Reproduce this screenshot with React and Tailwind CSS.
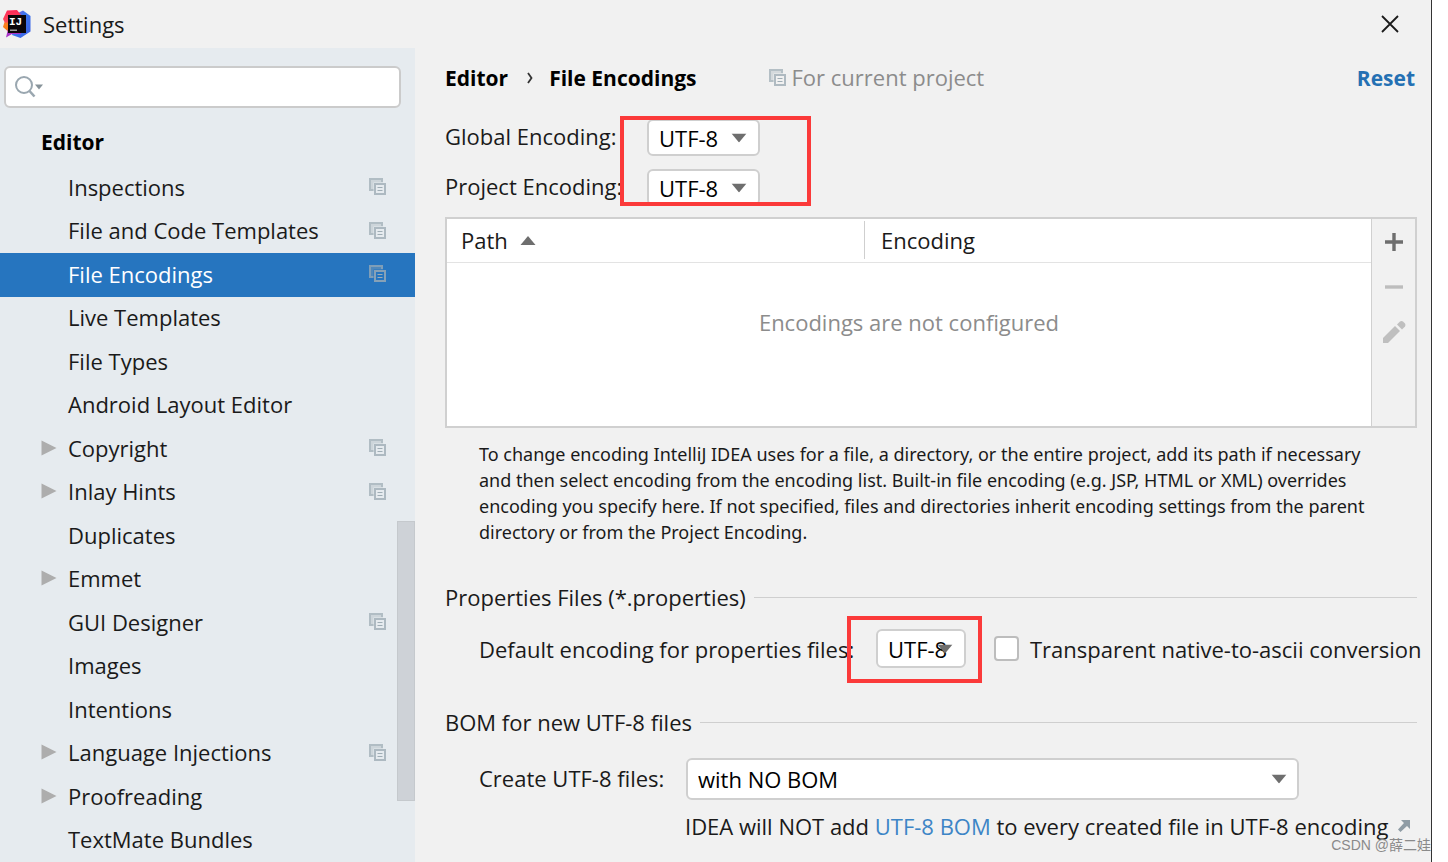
import { useState } from 'react';

const treeItems = [
    { name: 'Inspections', project: true },
    { name: 'File and Code Templates', project: true },
    { name: 'File Encodings', project: true },
    { name: 'Live Templates' },
    { name: 'File Types' },
    { name: 'Android Layout Editor' },
    { name: 'Copyright', project: true, group: true },
    { name: 'Inlay Hints', project: true, group: true },
    { name: 'Duplicates' },
    { name: 'Emmet', group: true },
    { name: 'GUI Designer', project: true },
    { name: 'Images' },
    { name: 'Intentions' },
    { name: 'Language Injections', project: true, group: true },
    { name: 'Proofreading', group: true },
    { name: 'TextMate Bundles' },
];

const Logo = () => (
    <svg viewBox="0 0 28 28" className="w-7 h-7 shrink-0" aria-hidden="true">
        <defs>
            <linearGradient id="pinkSide" x1="0" y1="0" x2="0" y2="1">
                <stop offset="0" stopColor="#fe2857" />
                <stop offset="0.42" stopColor="#fb4a5a" />
                <stop offset="0.5" stopColor="#fc801d" />
                <stop offset="0.7" stopColor="#f97a12" />
                <stop offset="0.8" stopColor="#a935c9" />
            </linearGradient>
            <linearGradient id="blueSide" x1="0" y1="0" x2="1" y2="1">
                <stop offset="0" stopColor="#9a4fd0" />
                <stop offset="0.4" stopColor="#3b78f0" />
                <stop offset="1" stopColor="#3f5fe0" />
            </linearGradient>
        </defs>
        <path d="M15 3 L20 0.5 L27.5 6 V21.5 L17.5 28 L9 25 Z" fill="url(#blueSide)" />
        <path d="M4 0.5 L14 0 L18 5 V24 L9 24 L3 27.5 L4.5 21 L0 17 L1.5 12 L0 9 Z" fill="url(#pinkSide)" />
        <rect x="5" y="5" width="18" height="18" fill="#0b0508" />
        <rect x="7" y="19.5" width="7" height="1.5" fill="#9a9a9a" />
        <text x="6" y="15" fontSize="11" fontWeight="700" fill="#fff" fontFamily="Liberation Mono, monospace">IJ</text>
    </svg>
);

const ProjectIcon = () => (
    <svg viewBox="0 0 17 17" className="w-[17px] h-[17px] shrink-0" fill="none" aria-hidden="true">
        <path d="M0 0h14v4.5H4.5V13H0z" fill="#9fadb5" fillOpacity="0.35" />
        <path d="M4.5 12H1V1h12v3" stroke="#9fadb5" strokeOpacity="0.6" strokeWidth="2" />
        <rect x="6" y="6" width="10" height="10" stroke="#9fadb5" strokeOpacity="0.8" strokeWidth="2" />
        <path d="M8.5 9.5h5M8.5 12.5h5" stroke="#9fadb5" strokeWidth="1.2" />
    </svg>
);

const DownArrow = ({ className }) => (
    <svg viewBox="0 0 16 9" className={`absolute top-1/2 -translate-y-1/2 w-4 h-[9px] pointer-events-none ${className}`} aria-hidden="true">
        <path d="M0.5 0h15L8 9z" fill="#6e6e6e" />
    </svg>
);

const Select = ({ id, options, className, arrow }) => (
    <div className={`relative ${className}`}>
        <select id={id} className="w-full h-full appearance-none bg-white border-2 border-[#cfcfcf] rounded-md pl-[10px] text-black outline-none focus:border-blue-400">
            {options.map(option => <option key={option}>{option}</option>)}
        </select>
        <DownArrow className={arrow} />
    </div>
);

const SectionTitle = ({ children }) => (
    <div className="flex items-center gap-2 h-8">
        <h2>{children}</h2>
        <div className="flex-1 h-px bg-[#cfcfcf]" />
    </div>
);

const Sidebar = () => {
    const [selected, setSelected] = useState('File Encodings');

    return (
        <aside className="relative w-[415px] shrink-0 bg-[#e6ebef] flex flex-col">
            <div className="relative mx-1 mr-[14px] mt-[18px]">
                <input type="text" aria-label="Search settings" className="w-full h-[42px] bg-white border-2 border-[#cbcbcb] rounded-md pl-11 pr-2 outline-none focus:border-blue-400" />
                <svg viewBox="0 0 28 22" className="absolute left-[11px] top-[10px] w-7 h-[22px] pointer-events-none" fill="none" aria-hidden="true">
                    <circle cx="9" cy="9" r="8" stroke="#9aa7b0" strokeWidth="2" />
                    <path d="M14.5 15l5 5.5" stroke="#9aa7b0" strokeWidth="2.6" />
                    <path d="M20 8.5h8l-4 5z" fill="#87939a" />
                </svg>
            </div>
            <div className="h-[58px] pl-[41px] pt-[10px] flex items-center text-[21px] font-bold text-black">Editor</div>
            <nav className="flex-1 flex flex-col">
                {treeItems.map(item => (
                    <button
                        key={item.name}
                        type="button"
                        onClick={() => setSelected(item.name)}
                        className={`flex-1 min-h-10 flex items-center pl-[41px] pr-[29px] pb-0.5 text-left ${selected === item.name ? 'bg-[#2675bf] text-white' : ''}`}
                    >
                        <span className="w-[27px] shrink-0">
                            {item.group && (
                                <svg viewBox="0 0 16 16" className="w-4 h-4" aria-hidden="true">
                                    <path d="M0.5 0.5v15l15-7.5z" fill="#adadad" />
                                </svg>
                            )}
                        </span>
                        <span className="flex-1">{item.name}</span>
                        {item.project && <ProjectIcon />}
                    </button>
                ))}
            </nav>
            {/* scrollbar thumb */}
            <div className="absolute right-0 top-[473px] w-[18px] h-[280px] bg-[#ced2d7] border border-[#c5c9cd]" />
        </aside>
    );
};

const EncodingTable = () => (
    <div className="mt-[11px] flex h-[211px] border-2 border-[#d0d0d0]">
        <div className="flex-1 bg-white">
            <table className="w-full table-fixed border-collapse">
                <thead>
                    <tr className="h-[43px] border-b border-[#e3e3e3] text-left">
                        <th className="w-[418px] p-0 font-normal">
                            <div className="flex items-center gap-3 h-[38px] pl-[14px] border-r border-[#cfcfcf]">
                                Path
                                <svg viewBox="0 0 16 9" className="w-4 h-[9px]" aria-hidden="true">
                                    <path d="M0.5 9h15L8 0z" fill="#6e6e6e" />
                                </svg>
                            </div>
                        </th>
                        <th className="p-0 pl-4 font-normal">Encoding</th>
                    </tr>
                </thead>
                <tbody>
                    <tr>
                        <td colSpan={2} className="pt-[45px] text-center text-[#8c8c8c]">Encodings are not configured</td>
                    </tr>
                </tbody>
            </table>
        </div>
        <div className="w-[44px] border-l border-[#d0d0d0] flex flex-col">
            <button type="button" aria-label="Add" className="h-[45px] flex items-center justify-center">
                <svg viewBox="0 0 18 18" className="w-[18px] h-[18px]" aria-hidden="true">
                    <path d="M9 0v18M0 9h18" stroke="#6e6e6e" strokeWidth="3.4" />
                </svg>
            </button>
            <button type="button" aria-label="Remove" disabled className="h-[45px] flex items-center justify-center">
                <svg viewBox="0 0 18 18" className="w-[18px] h-[18px]" aria-hidden="true">
                    <path d="M0 9h18" stroke="#bdbdbd" strokeWidth="3.4" />
                </svg>
            </button>
            <button type="button" aria-label="Edit" disabled className="h-[45px] flex items-center justify-center">
                <svg viewBox="0 0 24 24" className="w-6 h-6" aria-hidden="true">
                    <path d="M1 18L13 6l5 5L6 23H1z" fill="#bfbfbf" />
                    <path d="M15 4.5L18 1.5q1.5-1 3 0l2 2q1 1.5 0 3l-3 3z" fill="#bfbfbf" />
                </svg>
            </button>
        </div>
    </div>
);

const App = () => {
    const [transparent, setTransparent] = useState(false);

    return (
        <div className="bg-white pr-4">
            <div className="relative min-h-screen flex flex-col overflow-hidden bg-[#f1f1f1] border-r border-[#333] font-['Open_Sans','Noto_Sans_CJK_SC',sans-serif] text-[22px] leading-7 text-[#1a1a1a]">
                <header className="h-12 flex items-center gap-3 pl-[3px] pr-8">
                    <Logo />
                    <h1 className="flex-1">Settings</h1>
                    <button type="button" aria-label="Close">
                        <svg viewBox="0 0 18 18" className="w-[18px] h-[18px]" aria-hidden="true">
                            <path d="M1 1l16 16M17 1L1 17" stroke="#1a1a1a" strokeWidth="1.8" />
                        </svg>
                    </button>
                </header>

                <div className="flex-1 flex">
                    <Sidebar />

                    <main className="flex-1 min-w-0 pl-[30px] pr-[14px]">
                        <div className="h-[60px] flex items-center">
                            <span className="text-[21px] font-bold text-black">Editor</span>
                            <svg viewBox="0 0 6 12" className="w-[6px] h-3 ml-[19px] mr-4" fill="none" aria-hidden="true">
                                <path d="M1 1l3.5 5L1 11" stroke="#333" strokeWidth="1.8" />
                            </svg>
                            <span className="text-[21px] font-bold text-black">File Encodings</span>
                            <span className="ml-[72px] pb-0.5 flex items-center gap-[6px] text-[#8c8c8c]">
                                <ProjectIcon />
                                For current project
                            </span>
                            <button type="button" className="ml-auto mr-0.5 text-[21px] font-bold text-[#2470b3]">Reset</button>
                        </div>

                        <div className="relative mt-[11px] flex flex-col gap-[13px]">
                            <div className="flex items-center h-[37px]">
                                <label htmlFor="global" className="w-[202px] pb-[3px]">Global Encoding:</label>
                                <Select id="global" options={['UTF-8', 'GBK', 'ISO-8859-1']} className="w-[113px] h-full" arrow="right-[13px]" />
                            </div>
                            <div className="flex items-center h-[37px]">
                                <label htmlFor="project" className="w-[202px] pb-[3px]">Project Encoding:</label>
                                <Select id="project" options={['UTF-8', 'GBK', 'ISO-8859-1']} className="w-[113px] h-full" arrow="right-[13px]" />
                            </div>
                            <div className="absolute left-[175px] -top-[3px] w-[191px] h-[90px] border-4 border-[#fb3a3a] pointer-events-none" />
                        </div>

                        <EncodingTable />

                        <p className="mt-[13px] pl-[34px] font-['Noto_Sans',sans-serif] text-[18px] leading-[26px]">
                            To change encoding IntelliJ IDEA uses for a file, a directory, or the entire project, add its path if necessary<br />
                            and then select encoding from the encoding list. Built-in file encoding (e.g. JSP, HTML or XML) overrides<br />
                            encoding you specify here. If not specified, files and directories inherit encoding settings from the parent<br />
                            directory or from the Project Encoding.
                        </p>

                        <div className="mt-9">
                            <SectionTitle>Properties Files (*.properties)</SectionTitle>
                        </div>
                        <div className="relative mt-4 pl-[34px] flex items-center h-[39px] whitespace-nowrap">
                            <label htmlFor="properties" className="w-[397px] shrink-0">Default encoding for properties files:</label>
                            <Select id="properties" options={['UTF-8', 'GBK', 'ISO-8859-1']} className="w-[90px] h-full shrink-0" arrow="right-[13px]" />
                            <input
                                id="ascii"
                                type="checkbox"
                                checked={transparent}
                                onChange={(e) => setTransparent(e.target.checked)}
                                className="ml-7 w-[25px] h-[25px] shrink-0 appearance-none bg-white border-2 border-[#bdbdbd] rounded checked:bg-[#2675bf]"
                            />
                            <label htmlFor="ascii" className="ml-[11px]">Transparent native-to-ascii conversion</label>
                            <div className="absolute left-[402px] -top-[13px] w-[135px] h-[67px] border-4 border-[#fb3a3a] pointer-events-none" />
                        </div>

                        <div className="mt-[38px]">
                            <SectionTitle>BOM for new UTF-8 files</SectionTitle>
                        </div>
                        <div className="mt-5 pl-[34px] pr-[118px] flex items-center">
                            <label htmlFor="bom" className="w-[207px] shrink-0 pb-[3px]">Create UTF-8 files:</label>
                            <Select id="bom" options={['with NO BOM', 'with BOM']} className="flex-1 h-[42px]" arrow="right-[12px]" />
                        </div>
                        <p className="mt-3 pl-[240px] flex items-center whitespace-nowrap">
                            <span>
                                IDEA will NOT add <a href="#bom" className="text-[#3d85c6]">UTF-8 BOM</a> to every created file in UTF-8 encoding
                            </span>
                            <svg viewBox="0 0 12 12" className="w-3 h-3 ml-[10px] shrink-0" aria-hidden="true">
                                <path d="M3 0h9v9l-3-3-6.5 6L0 9.5 6 3z" fill="#8f9ca5" />
                            </svg>
                        </p>
                    </main>
                </div>

                <div className="absolute right-0 bottom-[7px] font-['Liberation_Sans','Noto_Sans_CJK_SC',sans-serif] text-[14px] leading-5 text-[#8a8a8a] whitespace-nowrap">CSDN @薛二娃</div>
            </div>
        </div>
    );
};

export default App;
